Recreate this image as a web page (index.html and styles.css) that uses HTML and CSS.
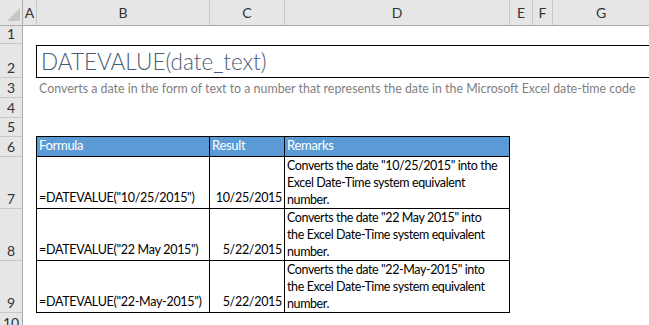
FILE: index.html
```html
<!DOCTYPE html>
<html lang="en">
<head>
    <meta charset="UTF-8">
    <title>DATEVALUE</title>
    <link rel="stylesheet" href="styles.css">
</head>
<body>
    <div class="colheads">
        <div class="corner">
            <svg width="22" height="25" viewBox="0 0 22 25">
                <polygon points="7,21 20,21 20,8" fill="#c6c6c6"/>
            </svg>
        </div>
        <div class="colhead w-a">A</div>
        <div class="colhead w-b">B</div>
        <div class="colhead w-c">C</div>
        <div class="colhead w-d">D</div>
        <div class="colhead w-e">E</div>
        <div class="colhead w-f">F</div>
        <div class="colhead w-g">G</div>
    </div>

    <div class="sheet">
        <div class="rowheads">
            <div class="rowhead h-1">1</div>
            <div class="rowhead h-2">2</div>
            <div class="rowhead h-3">3</div>
            <div class="rowhead h-4">4</div>
            <div class="rowhead h-5">5</div>
            <div class="rowhead h-6">6</div>
            <div class="rowhead h-7">7</div>
            <div class="rowhead h-7">8</div>
            <div class="rowhead h-7">9</div>
            <div class="rowhead h-10">10</div>
        </div>

        <div class="cells">
            <div class="spacer h-1"></div>
            <div class="title">DATEVALUE(date_text)</div>
            <div class="subtitle">Converts a date in the form of text to a number that represents the date in the Microsoft Excel date-time code</div>
            <div class="spacer gap"></div>

            <div class="table">
                <div class="row head">
                    <div class="cell w-b">Formula</div>
                    <div class="cell w-c">Result</div>
                    <div class="cell w-d">Remarks</div>
                </div>
                <div class="row">
                    <div class="cell w-b">=DATEVALUE("10/25/2015")</div>
                    <div class="cell w-c num">10/25/2015</div>
                    <div class="cell w-d note">Converts the date "10/25/2015" into the<br>Excel Date-Time system equivalent<br>number.</div>
                </div>
                <div class="row">
                    <div class="cell w-b">=DATEVALUE("22 May 2015")</div>
                    <div class="cell w-c num">5/22/2015</div>
                    <div class="cell w-d note">Converts the date "22 May 2015" into<br>the Excel Date-Time system equivalent<br>number.</div>
                </div>
                <div class="row">
                    <div class="cell w-b">=DATEVALUE("22-May-2015")</div>
                    <div class="cell w-c num">5/22/2015</div>
                    <div class="cell w-d note">Converts the date "22-May-2015" into<br>the Excel Date-Time system equivalent<br>number.</div>
                </div>
            </div>
        </div>
    </div>
</body>
</html>
```

FILE: styles.css
```css
* {
    margin: 0;
    padding: 0;
    box-sizing: border-box;
}

body {
    width: 649px;
    height: 325px;
    overflow: hidden;
    background-color: white;
    font-family: 'Lato', 'Liberation Sans', sans-serif;
    font-size: 12.5px;
    color: #000;
}

/* column letters */
.colheads {
    display: flex;
    height: 26px;
    background-color: #e6e6e6;
    border-bottom: 1px solid #ababab;
}

.corner {
    width: 23px;
    flex-shrink: 0;
    border-right: 1px solid #ababab;
}

.corner svg {
    display: block;
}

.colhead {
    flex-shrink: 0;
    display: flex;
    align-items: center;
    justify-content: center;
    border-right: 1px solid #c8c8c8;
    color: #333;
    font-size: 14px;
}

.w-a { width: 14px; }
.w-b { width: 173px; }
.w-c { width: 75px; }
.w-d { width: 225px; }
.w-e { width: 23px; }
.w-f { width: 20px; }
.w-g { flex: 1; border-right: none; }

/* rows */
.sheet {
    display: flex;
}

.rowheads {
    width: 23px;
    flex-shrink: 0;
    background-color: #e6e6e6;
    border-right: 1px solid #ababab;
}

.rowhead {
    display: flex;
    align-items: flex-end;
    justify-content: center;
    padding-bottom: 1px;
    border-bottom: 1px solid #c8c8c8;
    color: #333;
    font-size: 14px;
    line-height: 17px;
}

.h-1 { height: 18px; }
.h-2 { height: 34px; }
.h-3 { height: 20px; }
.h-4 { height: 20px; }
.h-5 { height: 19px; }
.h-6 { height: 20px; }
.h-7 { height: 52px; }
.h-10 { height: 20px; }

.cells {
    flex: 1;
    min-width: 0;
}

.title {
    width: 700px;
    height: 33px;
    margin: 1px 0 0 13px;
    padding: 2px 0 0 4px;
    border: 1px solid #000;
    color: #4a5b78;
    font-weight: 300;
    font-size: 22.5px;
    line-height: 28px;
    white-space: nowrap;
}

.subtitle {
    height: 20px;
    padding: 3px 0 0 16px;
    color: #7f7f7f;
    font-size: 12.4px;
    line-height: 16px;
    white-space: nowrap;
}

.gap {
    height: 38px;
}

/* data table */
.table {
    width: 474px;
    margin-left: 13px;
    border-left: 1px solid #000;
    border-top: 1px solid #000;
}

.row {
    display: flex;
    height: 52px;
}

.row.head {
    height: 20px;
    background-color: #5b9bd5;
    color: white;
    font-size: 13px;
}

.cell {
    flex-shrink: 0;
    display: flex;
    align-items: flex-end;
    padding: 0 2px 2px 2px;
    border-right: 1px solid #000;
    border-bottom: 1px solid #000;
    line-height: 17px;
    letter-spacing: -0.3px;
    white-space: nowrap;
}

.cell.num {
    justify-content: flex-end;
}

.cell.note {
    display: block;
    padding-top: 0;
    letter-spacing: -0.4px;
}
```
